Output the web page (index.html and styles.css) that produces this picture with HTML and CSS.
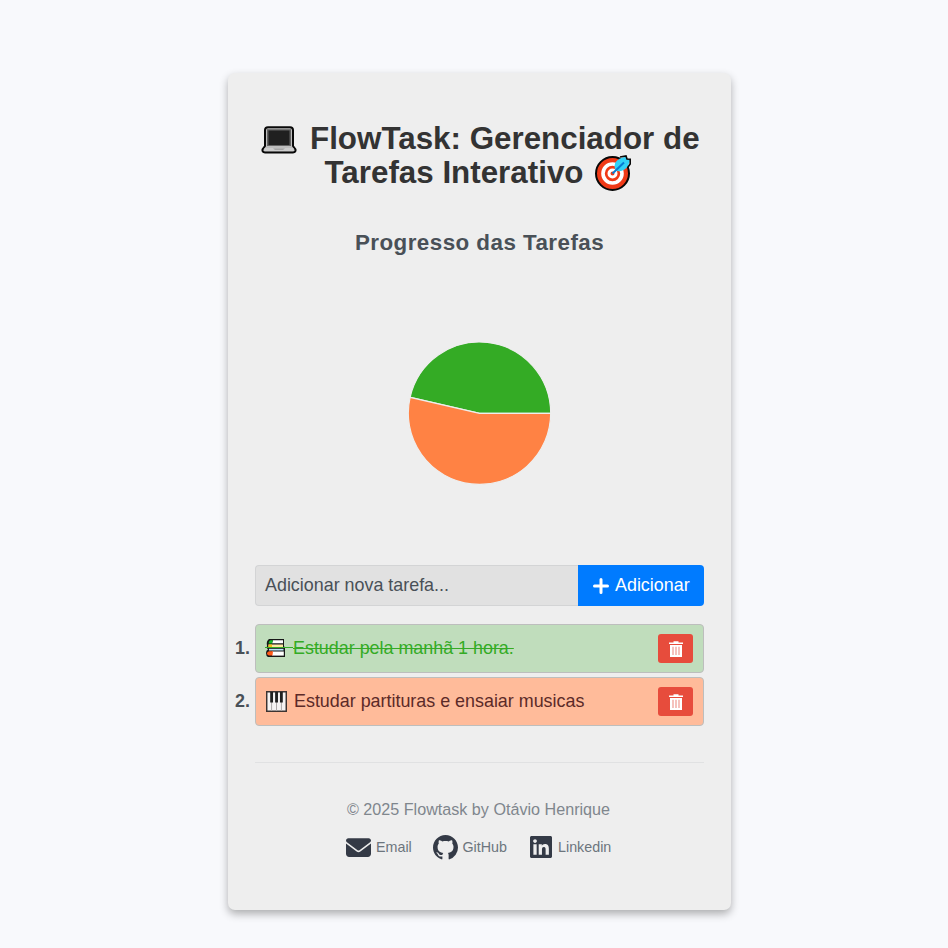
FILE: index.html
```html
<!DOCTYPE html>
<html lang="pt-BR">
<head>
<meta charset="utf-8">
<title>FlowTask</title>
<link rel="stylesheet" href="styles.css">
</head>
<body>
<main class="card">
  <h1 class="title">
    <span class="title-line"><svg class="laptop" viewBox="0 0 36 28"><path d="M4 20V4Q4 1.2 7 1.2H29Q32 1.2 32 4V20L34.5 23.5Q35 26.4 32 26.4H4Q1 26.4 1.500 23.5Z" fill="#bdbdbd" stroke="#080808" stroke-width="2"/><path d="M6 3.200H30V20H6Z" fill="#636363"/><path d="M7.500 4.500H28.500V19H7.500Z" fill="#202020"/><path d="M3.500 22H32.500L33 25H3Z" fill="#ccc"/><path d="M12 22.500H24L22 23.800H14Z" fill="#999"/></svg><span class="t1">FlowTask: Gerenciador de</span></span>
    <span class="title-line"><span class="t2">Tarefas Interativo</span><svg class="target" viewBox="0 0 36 36"><circle cx="17.500" cy="18.500" r="16.500" fill="#f03a17" stroke="#080808" stroke-width="2"/><circle cx="17.500" cy="18.500" r="9.500" fill="none" stroke="#fff" stroke-width="3.600"/><circle cx="17.500" cy="18.500" r="3.500" fill="#f03a17" stroke="#fff" stroke-width="3"/><path d="M20 14Q18 7 25 3.500L31 1.500L32 4L35 5L33 11Q29 17 22.500 16Z" fill="#31d2f7"/><path d="M25 2L31 1L32 4L35.200 4.300V9L33 12" fill="none" stroke="#080808" stroke-width="1.600"/><path d="M17.500 18.500L29 7.500" stroke="#087bd1" stroke-width="2"/></svg></span>
  </h1>
  <h2 class="subtitle">Progresso das Tarefas</h2>
  <svg class="chart" viewBox="0 0 144 144">
    <path d="M72.500 72.300L3.100 56.300A71.200 71.200 0 0 1 143.700 72.300Z" fill="#34ab25" stroke="#eee" stroke-width="1.200"/>
    <path d="M72.500 72.300H143.700A71.200 71.200 0 1 1 3.100 56.300Z" fill="#ff8244" stroke="#eee" stroke-width="1.200"/>
  </svg>
  <div class="add-row">
    <div class="field">Adicionar nova tarefa...</div>
    <button class="add"><svg viewBox="0 0 16 16"><path d="M8 1.500V14.500M1.500 8H14.500" stroke="#fff" stroke-width="3" stroke-linecap="round"/></svg><span>Adicionar</span></button>
  </div>
  <div class="tasks">
    <div class="task-row"><span class="num">1.</span>
      <div class="task done"><svg class="books" viewBox="0 0 21 20"><path d="M4 1H19V8.500L20 9V19H3Q1 18 1 15Q1 12 3 11.500Q1 10 2 7.500Q1 3 4 1Z" fill="#171717"/><path d="M8 2.200H18V5.300H7Z" fill="#fff"/><path d="M5 2.200H8L7 5.500H3.500Q3.500 3.500 5 2.200Z" fill="#16bd29"/><path d="M3.500 6.500H18V9H3.500Z" fill="#ffe9a0"/><path d="M3.500 6.500H7V9H3.500Z" fill="#f5c21b"/><path d="M4 10.800H18.500V12.500H4Z" fill="#b7e5fa"/><path d="M7 13.500H18.800V17.600H7Z" fill="#fff"/><path d="M4 13.200H8L7.500 17.600H4Q2 17 2 15.300Q2 14 4 13.200Z" fill="#ff5b19"/><path d="M0 9.500H28" stroke="#34ab25" stroke-width="1"/></svg><span class="task-text">Estudar pela manhã 1 hora.</span>
        <button class="del"><svg viewBox="0 0 14 16"><path d="M0 1.500H4.500V.3H9.500V1.500H14V3H0Z" fill="#fff"/><path d="M1 4H13V16H1Z" fill="#fff"/><path d="M4 5.800V14M7 5.800V14M10 5.800V14" stroke="#f0a29a" stroke-width="1.300"/></svg></button></div></div>
    <div class="task-row"><span class="num">2.</span>
      <div class="task pending"><svg class="piano" viewBox="0 0 20 20"><path d="M.7 .7H19.300V19.300H.7Z" fill="#f5f3f3" stroke="#3c3331" stroke-width="1.400"/><path d="M5.300 1V19M10 1V19M14.700 1V19" stroke="#aaa6a6" stroke-width=".9"/><path d="M4 1H6.700V11H4ZM8.700 1H11.400V11H8.700ZM13.300 1H16V11H13.300Z" fill="#202020"/></svg><span class="task-text">Estudar partituras e ensaiar musicas</span>
        <button class="del"><svg viewBox="0 0 14 16"><path d="M0 1.500H4.500V.3H9.500V1.500H14V3H0Z" fill="#fff"/><path d="M1 4H13V16H1Z" fill="#fff"/><path d="M4 5.800V14M7 5.800V14M10 5.800V14" stroke="#f0a29a" stroke-width="1.300"/></svg></button></div></div>
  </div>
  <footer class="footer">
    <p class="copy">© 2025 Flowtask by Otávio Henrique</p>
    <nav class="links">
      <a class="link email"><svg viewBox="0 0 512 384"><path d="M48 0C21.500 0 0 21.500 0 48c0 15.100 7.100 29.300 19.200 38.400L236.800 249.600c11.400 8.500 27 8.500 38.400 0L492.800 86.400C504.900 77.300 512 63.100 512 48c0-26.500-21.500-48-48-48H48zM0 112V320c0 35.300 28.700 64 64 64H448c35.300 0 64-28.700 64-64V112L294.400 275.200c-22.800 17.100-54 17.100-76.800 0L0 112z" fill="#343a46"/></svg><span>Email</span></a>
      <a class="link github"><svg viewBox="0 0 16 16"><path d="M8 0C3.580 0 0 3.580 0 8c0 3.540 2.290 6.530 5.470 7.590.4.070.55-.17.55-.38 0-.19-.01-.82-.01-1.490-2.010.37-2.530-.49-2.690-.94-.09-.23-.48-.94-.82-1.130-.28-.15-.68-.52-.01-.53.63-.01 1.080.58 1.230.82.72 1.210 1.870.87 2.330.66.07-.52.28-.87.51-1.070-1.780-.2-3.640-.89-3.640-3.950 0-.87.31-1.590.82-2.150-.08-.2-.36-1.020.08-2.120 0 0 .67-.21 2.200.82.64-.18 1.320-.27 2-.27s1.360.09 2 .27c1.530-1.040 2.200-.82 2.200-.82.44 1.100.16 1.920.08 2.120.51.56.82 1.270.82 2.150 0 3.070-1.870 3.750-3.650 3.950.29.25.54.73.54 1.480 0 1.070-.01 1.930-.01 2.200 0 .21.15.46.55.38A8.010 8.010 0 0 0 16 8c0-4.420-3.580-8-8-8z" fill="#343a46"/></svg><span>GitHub</span></a>
      <a class="link linkedin"><svg viewBox="0 32 448 448"><path d="M416 32H31.900C14.300 32 0 46.500 0 64.300v383.400C0 465.500 14.300 480 31.900 480H416c17.600 0 32-14.500 32-32.300V64.300c0-17.800-14.400-32.300-32-32.300zM135.400 416H69V202.200h66.500V416zm-33.200-243c-21.300 0-38.500-17.300-38.500-38.500S80.900 96 102.200 96c21.200 0 38.500 17.300 38.500 38.500 0 21.300-17.200 38.500-38.500 38.500zm282.100 243h-66.400V312c0-24.800-.5-56.700-34.500-56.700-34.600 0-39.900 27-39.900 54.900V416h-66.400V202.200h63.700v29.200h.9c8.900-16.800 30.600-34.500 62.900-34.500 67.200 0 79.700 44.300 79.700 101.900V416z" fill="#343a46"/></svg><span>Linkedin</span></a>
    </nav>
  </footer>
</main>
</body>
</html>
```
FILE: styles.css
```css
* { box-sizing: border-box; }
body {
  margin: 0;
  height: 948px;
  overflow: hidden;
  padding: 73px 0 0 228px;
  background: #f8f9fc;
  font-family: "Liberation Sans", Arial, sans-serif;
  color: #495057;
}
.card {
  width: 502.5px;
  height: 837px;
  padding: 49px 26.5px 0 27px;
  background: #eee;
  border-radius: 7px;
  box-shadow: 0 4px 9px rgba(0, 0, 0, .3);
}
.title {
  margin: 0;
  font-size: 31.35px;
  line-height: 34px;
  color: #333;
}
.title-line { display: flex; align-items: center; height: 34px; white-space: nowrap; }
.laptop { width: 36px; height: 28px; margin: 1px 0 0 6px; flex: none; }
.t1 { margin-left: 13px; }
.t2 { margin-left: 69.5px; }
.target { width: 36px; height: 36px; margin: -1px 0 0 12px; flex: none; }
.subtitle {
  margin: 40px 0 0;
  font-size: 22.4px;
  line-height: 26px;
  letter-spacing: .45px;
  text-align: center;
}
.chart { display: block; width: 144px; height: 144px; margin: 85px 0 0 152px; }
.add-row { display: flex; width: 449px; height: 41px; margin-top: 80px; }
.field {
  flex: 1;
  padding-left: 9px;
  border: 1px solid #d3d4d5;
  border-right: 0;
  border-radius: 4px 0 0 4px;
  background: #e1e1e1;
  font-size: 17.9px;
  line-height: 38px;
}
.add {
  display: flex;
  align-items: center;
  width: 126px;
  padding: 0 0 0 15px;
  border: 0;
  border-radius: 0 4px 4px 0;
  background: #007bff;
  color: #fff;
  font: 17.9px/38px "Liberation Sans", Arial, sans-serif;
}
.add span { padding-bottom: 1px; }
.add svg { width: 16px; height: 16px; margin: 1px 6px 0 0; }
.tasks { display: flex; flex-direction: column; gap: 4px; margin-top: 18px; }
.task-row { display: flex; align-items: center; width: 469px; height: 49px; margin-left: -20px; }
.num { width: 20px; font-size: 17.9px; font-weight: bold; line-height: 20px; padding-bottom: 2px; flex: none; }
.task {
  display: flex;
  align-items: center;
  flex: 1;
  height: 49px;
  padding: 0 10px 0 9px;
  border: 1px solid #bdbebd;
  border-radius: 4px;
  font-size: 17.9px;
}
.done { background: #c0ddbc; color: #34ab25; }
.pending { background: #ffbb9a; color: #5c2a28; }
.task-text { white-space: nowrap; line-height: 20px; padding-bottom: 2px; }
.done .task-text { text-decoration: line-through; }
.books { width: 21px; height: 20px; margin: 0 7px 1px 0; overflow: visible; }
.piano { width: 21px; height: 21px; margin: 0 7px 1px 1px; }
.del {
  display: flex;
  align-items: center;
  justify-content: center;
  width: 35px;
  height: 29px;
  margin-left: auto;
  padding: 0;
  border: 0;
  border-radius: 3px;
  background: #e74c3c;
}
.del svg { width: 14px; height: 16px; margin-top: 1px; }
.footer { width: 449px; margin-top: 36px; border-top: 1px solid #e0e1e2; }
.copy {
  width: 447px;
  margin: 37px 0 0;
  font-size: 16.15px;
  line-height: 19px;
  text-align: center;
  color: #7f868d;
}
.links { display: flex; margin: 15px 0 0 91px; }
.link { display: flex; align-items: center; height: 26px; font-size: 14.3px; color: #6c757d; }
.link span { padding-bottom: 1px; }
.link svg { flex: none; }
.email { width: 87px; }
.email svg { width: 25px; height: 19px; margin-right: 5px; }
.github { width: 97px; }
.github svg { width: 25px; height: 25px; margin-right: 4.5px; }
.linkedin svg { width: 22px; height: 22px; margin-right: 6px; }
```
